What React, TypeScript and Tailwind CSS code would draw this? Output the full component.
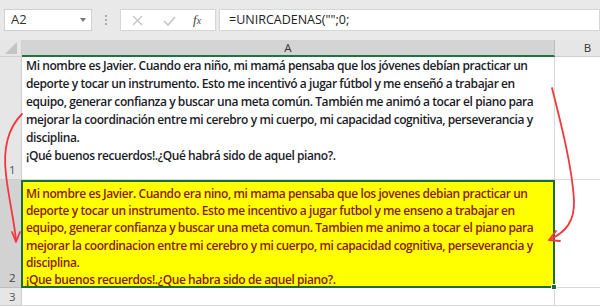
import React from "react";

const lines1 = [
  "Mi nombre es Javier. Cuando era niño, mi mamá pensaba que los jóvenes debían practicar un",
  "deporte y tocar un instrumento. Esto me incentivó a jugar fútbol y me enseñó a trabajar en",
  "equipo, generar confianza y buscar una meta común. También me animó a tocar el piano para",
  "mejorar la coordinación entre mi cerebro y mi cuerpo, mi capacidad cognitiva, perseverancia y",
  "disciplina.",
  "¡Qué buenos recuerdos!.¿Qué habrá sido de aquel piano?.",
];
const lines2 = [
  "Mi nombre es Javier. Cuando era nino, mi mama pensaba que los jovenes debian practicar un",
  "deporte y tocar un instrumento. Esto me incentivo a jugar futbol y me enseno a trabajar en",
  "equipo, generar confianza y buscar una meta comun. Tambien me animo a tocar el piano para",
  "mejorar la coordinacion entre mi cerebro y mi cuerpo, mi capacidad cognitiva, perseverancia y",
  "disciplina.",
  "¡Que buenos recuerdos!.¿Que habra sido de aquel piano?.",
];

export default function App() {
  return (
    <div
      className="relative w-[600px] h-[307px] overflow-hidden bg-white text-[#222]"
      style={{ fontFamily: "'Open Sans', 'Liberation Sans', sans-serif" }}
    >
      {/* toolbar */}
      <div className="h-[40px] bg-[#e9e9e9] flex items-start pt-[9px] pl-[4px]">
        <div className="w-[88px] h-[22px] bg-white border border-[#cfcfcf] flex items-center justify-between pl-[6px] pr-[5px]">
          <span className="text-[13px] text-[#333]">A2</span>
          <span className="w-0 h-0 border-l-[3px] border-r-[3px] border-t-[4px] border-l-transparent border-r-transparent border-t-[#777]" />
        </div>
        <div className="w-[28px] h-[22px] flex flex-col items-center justify-center gap-[2px]">
          <span className="w-[2px] h-[2px] bg-[#aaa]" />
          <span className="w-[2px] h-[2px] bg-[#aaa]" />
          <span className="w-[2px] h-[2px] bg-[#aaa]" />
        </div>
        <div className="w-[96px] h-[22px] bg-white border border-[#d6d6d6] flex items-center pl-[11px]">
          <svg width="11" height="11" viewBox="0 0 11 11" className="mr-[20px]">
            <path d="M1 1 L10 10 M10 1 L1 10" stroke="#c4c4c4" strokeWidth="1.3" />
          </svg>
          <svg width="13" height="11" viewBox="0 0 13 11" className="mr-[17px]">
            <path d="M1 6 L5 10 L12 2" stroke="#c4c4c4" strokeWidth="1.6" fill="none" />
          </svg>
          <span
            className="text-[13px] italic text-[#444]"
            style={{ fontFamily: "'Liberation Serif', serif" }}
          >
            f<span className="text-[10px]">x</span>
          </span>
        </div>
        <div className="ml-[3px] flex-1 h-[22px] bg-white border border-[#d6d6d6] flex items-center pl-[9px]">
          <span className="text-[12.5px] text-[#222]">=UNIRCADENAS("";0;</span>
        </div>
      </div>

      {/* grid */}
      <div className="grid grid-cols-[22px_533px_45px] grid-rows-[17px_123px_108px_18px]">
        {/* header row */}
        <div className="bg-[#e6e6e6] border-r border-b border-[#cfcfcf] relative">
          <svg width="14" height="13" className="absolute left-[4px] top-[2px]">
            <polygon points="13,0 13,12 1,12" fill="#c4c4c4" />
          </svg>
        </div>
        <div className="bg-[#d4d4d4] border-r border-[#bdbdbd] border-b-2 border-b-[#217346] flex items-center justify-center text-[11.5px] text-[#333]">
          A
        </div>
        <div className="bg-[#e6e6e6] border-b border-[#cfcfcf] flex items-center justify-center text-[11.5px] text-[#333] pl-[20px]">
          B
        </div>

        {/* row 1 */}
        <div className="bg-[#e6e6e6] border-r border-b border-[#cfcfcf] flex items-end justify-start pl-[9px] pb-[1px] text-[11.5px] text-[#555]">
          1
        </div>
        <div className="border-r border-b border-[#d9d9d9] pl-[4px] pt-0">
          {lines1.map((l, i) => (
            <div key={i} className="whitespace-nowrap text-[12px] leading-[18px] font-semibold text-[#1c1c28] tracking-[-0.42px]">
              {l}
            </div>
          ))}
        </div>
        <div className="border-b border-[#d9d9d9]" />

        {/* row 2 */}
        <div className="bg-[#d2d2d2] border-r border-b border-[#bdbdbd] flex items-end pl-[9px] pb-[1px] text-[11.5px] text-[#444]">
          2
        </div>
        <div className="relative bg-[#ffff00] border-2 border-[#1e6b3a] -ml-[1px] pl-[3px] pt-[3px]">
          {lines2.map((l, i) => (
            <div key={i} className="whitespace-nowrap text-[12px] leading-[17.2px] font-semibold text-[#8a1c06] tracking-[-0.42px]">
              {l}
            </div>
          ))}
          <div className="absolute -right-[4px] -bottom-[4px] w-[6px] h-[6px] bg-[#1e6b3a] border border-white" />
        </div>
        <div className="border-b border-[#d9d9d9]" />

        {/* row 3 */}
        <div className="bg-[#e6e6e6] border-r border-b border-[#cfcfcf] flex items-center pl-[9px] text-[11.5px] text-[#555]">
          3
        </div>
        <div className="border-r border-b border-[#d9d9d9]" />
        <div className="border-b border-[#d9d9d9]" />
      </div>

      {/* arrows */}
      <svg className="absolute left-0 top-0 pointer-events-none" width="600" height="307">
        <path
          d="M22 114 C 8 128, 3 150, 6 175 C 9 200, 14 220, 16 240"
          stroke="#f0393f"
          strokeWidth="1.8"
          fill="none"
          strokeLinecap="round"
        />
        <path d="M12 232 L16 242 L20 232" stroke="#f0393f" strokeWidth="1.8" fill="none" strokeLinecap="round" strokeLinejoin="round" />
        <path
          d="M552 88 C 560 120, 572 165, 574 200 C 575 222, 565 232, 551 239"
          stroke="#f0393f"
          strokeWidth="1.8"
          fill="none"
          strokeLinecap="round"
        />
        <path d="M556 231 L549 240 L560 241" stroke="#f0393f" strokeWidth="1.8" fill="none" strokeLinecap="round" strokeLinejoin="round" />
      </svg>
    </div>
  );
}
